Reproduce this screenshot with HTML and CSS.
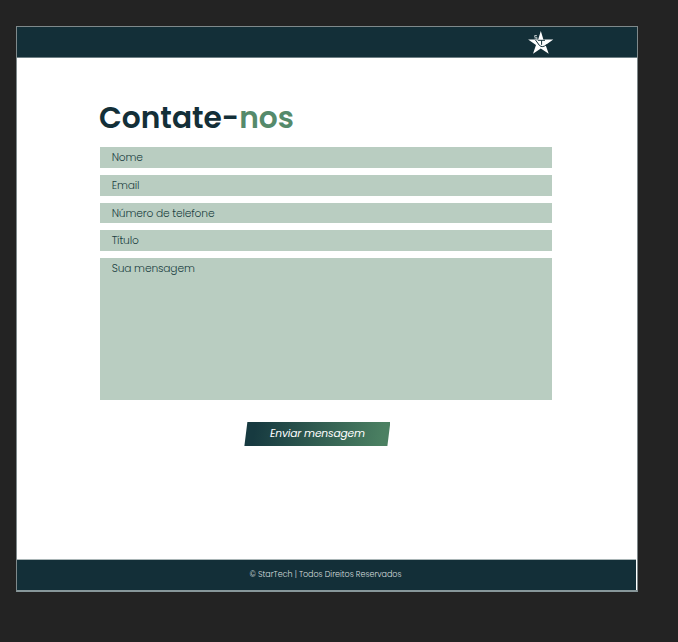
FILE: index.html
```html
<!DOCTYPE html>
<html lang="pt-BR">
<head>
<meta charset="utf-8">
<title>Contate-nos</title>
<link rel="stylesheet" href="styles.css">
</head>
<body>
<div class="page">
  <header class="header">
    <svg class="logo" viewBox="0 0 26 24" width="26" height="24">
      <path class="star" d="M12.8 0 L15.4 8.4 L25.3 8.4 L17.6 14 L20.7 22.8 L12.8 17.4 L5 22.8 L8 14 L0.1 8.4 L10.2 8.4Z"/>
      <path class="lines" d="M9.8 9.3H17M13.6 9.3V13.8M7.2 8.6L11.4 14.4Q14.5 17.2 18.6 13.6"/>
      <path class="spark" d="M8.9 4.5H6.7V6.3H8.9V8H6.5"/>
    </svg>
  </header>
  <main class="main">
    <h1 class="title">Contate-<span class="accent">nos</span></h1>
    <form class="form">
      <div class="field">Nome</div>
      <div class="field">Email</div>
      <div class="field">Número de telefone</div>
      <div class="field">Título</div>
      <div class="field message">Sua mensagem</div>
      <button class="send" type="button">Enviar mensagem</button>
    </form>
  </main>
  <footer class="footer">© StarTech | Todos Direitos Reservados</footer>
</div>
</body>
</html>
```
FILE: styles.css
```css
* { box-sizing: border-box; }
body {
  margin: 0;
  height: 642px;
  padding: 26px 40px 50px 16px;
  background: #232323;
  font-family: Poppins, Inter, "Open Sans", sans-serif;
  overflow: hidden;
}
.page {
  width: 622px;
  height: 566px;
  display: flex;
  flex-direction: column;
  background: #fff;
  border: 1px solid #7f898b;
  border-bottom: 2px solid #87979a;
}
.header {
  height: 31px;
  flex: none;
  display: flex;
  justify-content: flex-end;
  padding: 4px 83px 0 0;
  background: #132f38;
  border-bottom: 1px solid #6f8085;
}
.logo { display: block; }
.star { fill: #fff; }
.lines { fill: none; stroke: #132f38; stroke-width: 1; }
.spark { fill: none; stroke: #dce3e4; stroke-width: 0.8; }
.main { flex: 1; padding: 40px 85px 0 83px; }
.title {
  margin: 0 0 9px -1px;
  height: 40px;
  line-height: 40px;
  font-size: 29.7px;
  font-weight: 600;
  white-space: nowrap;
  color: #132f38;
}
.accent { color: #558a6b; }
.form { display: flex; flex-direction: column; gap: 7px; }
.field {
  height: 20.75px;
  padding-left: 11.7px;
  background: #b9cdc1;
  color: #203f42;
  font-size: 10.7px;
  font-weight: 300;
  letter-spacing: -0.15px;
  line-height: 21.6px;
  white-space: nowrap;
}
.message { height: 142px; }
.send {
  width: 146px;
  height: 24px;
  margin: 15px 0 0 144.4px;
  padding: 0 0 1px;
  border: 0;
  background: linear-gradient(100deg, #173a40 8%, #4b8062 94%);
  clip-path: polygon(3px 0, 100% 0, calc(100% - 3px) 100%, 0 100%);
  color: #fff;
  font: italic 400 10.7px/22px Poppins, Inter, "Open Sans", sans-serif;
  letter-spacing: -0.18px;
  white-space: nowrap;
}
.footer {
  height: 31px;
  flex: none;
  margin-right: 1px;
  padding-right: 2px;
  background: #132f38;
  border-top: 1px solid #a9b5b6;
  color: #d5dddd;
  font-size: 8px;
  font-weight: 300;
  letter-spacing: -0.04px;
  line-height: 30px;
  text-align: center;
  white-space: nowrap;
}
```
